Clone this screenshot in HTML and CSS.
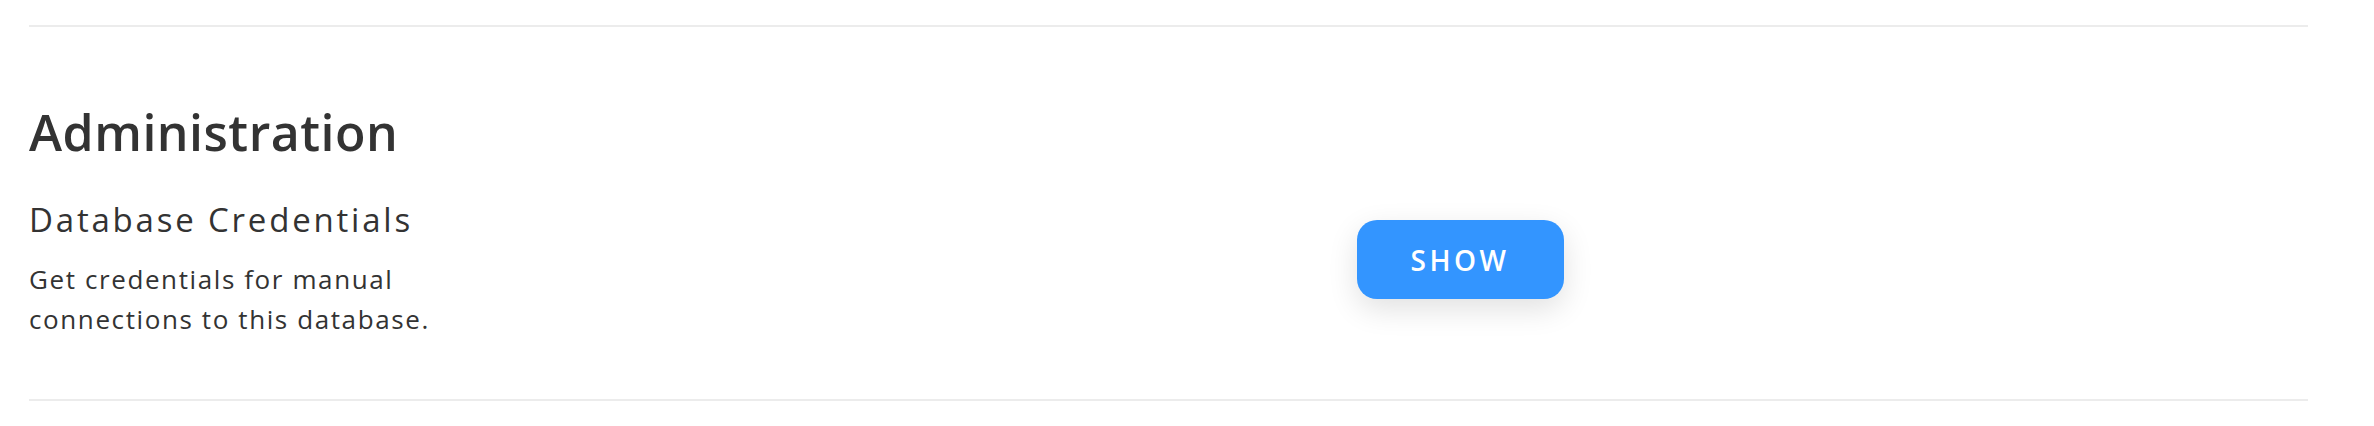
FILE: index.html
```html
<!DOCTYPE html>
<html lang="en">
<head>
    <meta charset="UTF-8">
    <meta name="viewport" content="width=device-width, initial-scale=1.0">
    <link rel="stylesheet" href="styles.css">
    <title>Database Settings</title>
</head>
<body>
    <div class="settings">
        <hr class="divider">
        <section class="section">
            <h2 class="section-title">Administration</h2>
            <div class="setting-row">
                <div class="setting-info">
                    <h3 class="setting-name">Database Credentials</h3>
                    <p class="setting-desc">Get credentials for manual connections to this database.</p>
                </div>
                <div class="setting-action">
                    <button class="btn-primary">SHOW</button>
                </div>
            </div>
        </section>
        <hr class="divider">
    </div>
</body>
</html>
```

FILE: styles.css
```css
body {
    margin: 0;
    background-color: #fff;
    font-family: 'Open Sans', 'Liberation Sans', sans-serif;
    color: #333;
}

.settings {
    padding: 25px 66px 0 29px;
}

.divider {
    border: 0;
    border-top: 2px solid #ececec;
    margin: 0;
}

.section {
    padding-top: 75px;
    padding-bottom: 60px;
}

.section-title {
    font-size: 50px;
    font-weight: 600;
    line-height: 60px;
    letter-spacing: 0.5px;
    margin: 0 0 38px 0;
}

.setting-row {
    display: grid;
    grid-template-columns: 583px 1fr;
    align-items: start;
}

.setting-info {
    max-width: 480px;
}

.setting-name {
    font-size: 33px;
    font-weight: 500;
    line-height: 40px;
    letter-spacing: 2.8px;
    margin: 0 0 19px 0;
}

.setting-desc {
    font-size: 26px;
    line-height: 40px;
    letter-spacing: 1.6px;
    margin: 0;
}

.setting-action {
    display: flex;
    justify-content: center;
    padding-top: 20px;
}

.btn-primary {
    width: 207px;
    height: 79px;
    border: none;
    border-radius: 20px;
    background-color: #3395ff;
    color: #fff;
    font-family: inherit;
    font-size: 28px;
    font-weight: 600;
    letter-spacing: 3.5px;
    cursor: pointer;
    box-shadow: 0 10px 30px rgba(0, 0, 0, 0.12);
}
```
